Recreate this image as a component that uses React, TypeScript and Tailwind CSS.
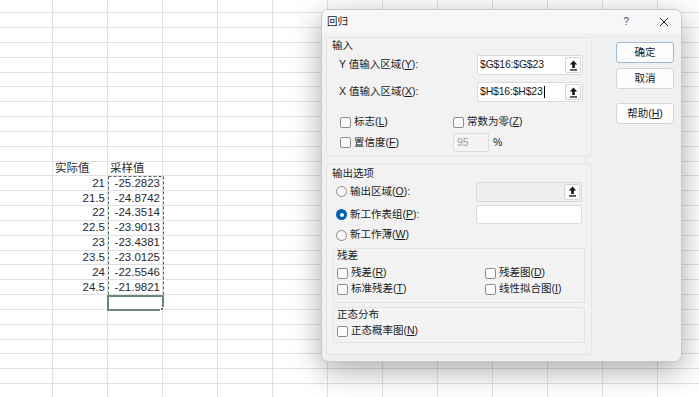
import React from 'react';

const font = "font-['Liberation_Sans','Noto_Sans_CJK_SC',sans-serif]";

const COLS = 13;
const ROWS = 27;

// spreadsheet cell text keyed by "row-col"
const cells: Record<string, { text: string; align: 'left' | 'right' }> = {
    '11-1': { text: '实际值', align: 'left' },
    '11-2': { text: '采样值', align: 'left' },
};
const xs = ['21', '21.5', '22', '22.5', '23', '23.5', '24', '24.5'];
const ys = ['-25.2823', '-24.8742', '-24.3514', '-23.9013', '-23.4381', '-23.0125', '-22.5546', '-21.9821'];
xs.forEach((v, i) => {
    cells[`${12 + i}-1`] = { text: v, align: 'right' };
    cells[`${12 + i}-2`] = { text: ys[i], align: 'right' };
});

function Sheet() {
    const items = [];
    for (let r = 0; r < ROWS; r++) {
        for (let c = 0; c < COLS; c++) {
            const cell = cells[`${r}-${c}`];
            items.push(
                <div
                    key={`${r}-${c}`}
                    className={`border-r border-b border-[#e1e1e1] flex items-center overflow-visible whitespace-nowrap text-[11.5px] text-[#2a2a2a] ${cell?.align === 'right' ? 'justify-end pr-[2px]' : 'pl-[2px]'}`}
                >
                    {cell?.text}
                </div>
            );
        }
    }
    return (
        <div className="grid grid-cols-[53px_repeat(12,55px)] grid-rows-[13.3px_repeat(26,14.83px)]">
            {items}
        </div>
    );
}

function UpArrow() {
    return (
        <svg width="9" height="11" viewBox="0 0 9 11">
            <path d="M4.5 0.6 L8.2 4.6 H5.8 V8 H3.2 V4.6 H0.8 Z" fill="#151515" />
            <rect x="1" y="9.3" width="7" height="1.3" fill="#151515" />
        </svg>
    );
}

function RefInput({ value, disabled, caret }: { value?: string; disabled?: boolean; caret?: boolean }) {
    return (
        <div className={`w-[106px] h-[20px] border border-[#dadada] rounded-[2px] flex items-center justify-between pl-[2px] pr-[1px] ${disabled ? 'bg-[#efefef]' : 'bg-white'}`}>
            <span className="text-[10.5px] text-[#1a1a1a] tracking-[-0.2px]">
                {value}
                {caret && <span className="inline-block w-px h-[12px] bg-black align-middle ml-px" />}
            </span>
            <div className="w-[16px] h-[16px] border border-[#d4d4d4] rounded-[2px] bg-[#fbfbfb] flex items-center justify-center">
                <UpArrow />
            </div>
        </div>
    );
}

function Box() {
    return <span className="w-[11px] h-[11px] rounded-[2px] border border-[#8d8d8d] bg-[#fbfbfb] shrink-0" />;
}

function Check({ children, className = '' }: { children: React.ReactNode; className?: string }) {
    return (
        <div className={`flex items-center h-[14px] gap-[3px] ${className}`}>
            <Box />
            <span className="text-[10.5px] text-[#1a1a1a] whitespace-nowrap">{children}</span>
        </div>
    );
}

function Radio({ children, checked }: { children: React.ReactNode; checked?: boolean }) {
    return (
        <div className="flex items-center gap-[3px]">
            {checked ? (
                <span className="w-[11px] h-[11px] rounded-full bg-[#005fb8] flex items-center justify-center shrink-0">
                    <span className="w-[4px] h-[4px] rounded-full bg-white" />
                </span>
            ) : (
                <span className="w-[11px] h-[11px] rounded-full border border-[#8d8d8d] bg-[#f6f6f6] shrink-0" />
            )}
            <span className="text-[10.5px] text-[#1a1a1a] whitespace-nowrap">{children}</span>
        </div>
    );
}

function Btn({ children, primary }: { children: React.ReactNode; primary?: boolean }) {
    return (
        <div className={`w-[58px] h-[21px] rounded-[3px] border flex items-center justify-center text-[10.5px] text-[#1a1a1a] ${primary ? 'border-[#9fb9d6] bg-[#fcfcfc]' : 'border-[#d6d6d6] bg-[#fdfdfd]'}`}>
            {children}
        </div>
    );
}

function Dialog() {
    return (
        <div className="absolute left-[321px] top-[9px] w-[361px] h-[353px] rounded-[7px] border border-[#c9c9c9] bg-[#f0f0f0] shadow-[0_8px_30px_rgba(0,0,0,0.34)] overflow-hidden flex flex-col">
            {/* title bar */}
            <div className="h-[23px] bg-[#f7f7f7] flex items-center pl-[5px] text-[10.5px] text-[#1a1a1a]">
                <span>回归</span>
                <span className="ml-auto mr-[30px] text-[#555]">?</span>
                <svg width="10" height="10" viewBox="0 0 10 10" className="mr-[12px]">
                    <path d="M1 1 L9 9 M9 1 L1 9" stroke="#222" strokeWidth="1" />
                </svg>
            </div>

            <div className="flex pt-[4px] pl-[4px]">
                <div className="w-[266px] flex flex-col">
                    {/* input group */}
                    <div className="rounded-[3px] border border-[#e4e4e4] bg-[#f2f2f2] pt-[1px] pb-[3px] pl-[5px]">
                        <div className="h-[14px] flex items-center text-[10.5px] text-[#1a1a1a]">输入</div>
                        <div className="mt-[2px] flex items-center pl-[7px]">
                            <span className="w-[138px] text-[10.5px] text-[#1a1a1a]">Y 值输入区域(<u>Y</u>):</span>
                            <RefInput value="$G$16:$G$23" />
                        </div>
                        <div className="mt-[7px] flex items-center pl-[7px]">
                            <span className="w-[138px] text-[10.5px] text-[#1a1a1a]">X 值输入区域(<u>X</u>):</span>
                            <RefInput value="$H$16:$H$23" caret />
                        </div>
                        <div className="mt-[13px] flex items-center pl-[8px]">
                            <Check className="w-[113px]">标志(<u>L</u>)</Check>
                            <Check>常数为零(<u>Z</u>)</Check>
                        </div>
                        <div className="mt-[4px] flex items-center pl-[8px]">
                            <Check className="w-[113px]">置信度(<u>F</u>)</Check>
                            <div className="w-[36px] h-[19px] border border-[#dcdcdc] bg-[#f4f4f4] rounded-[2px] flex items-center pl-[3px] text-[10.5px] text-[#a0a0a0]">95</div>
                            <span className="ml-[4px] text-[10.5px] text-[#1a1a1a]">%</span>
                        </div>
                    </div>

                    {/* output group */}
                    <div className="mt-[8px] rounded-[3px] border border-[#e4e4e4] bg-[#f2f2f2] pt-[2px] pb-[11px] pl-[5px] pr-[6px]">
                        <div className="h-[14px] flex items-center text-[10.5px] text-[#1a1a1a]">输出选项</div>
                        <div className="mt-[1px] flex items-center pl-[4px] h-[19px]">
                            <div className="w-[140px]"><Radio>输出区域(<u>O</u>):</Radio></div>
                            <RefInput disabled />
                        </div>
                        <div className="mt-[4px] flex items-center pl-[4px] h-[19px]">
                            <div className="w-[140px]"><Radio checked>新工作表组(<u>P</u>):</Radio></div>
                            <div className="w-[106px] h-[19px] border border-[#dadada] bg-white rounded-[2px]" />
                        </div>
                        <div className="mt-[4px] flex items-center pl-[4px] h-[14px]">
                            <Radio>新工作薄(<u>W</u>)</Radio>
                        </div>

                        <div className="mt-[6px] ml-[1px] rounded-[3px] border border-[#e4e4e4] bg-[#f3f3f3] pb-[6px] pl-[3px]">
                            <div className="h-[14px] flex items-center text-[10.5px] text-[#1a1a1a]">残差</div>
                            <div className="mt-[3px] flex">
                                <Check className="w-[148px]">残差(<u>R</u>)</Check>
                                <Check>残差图(<u>D</u>)</Check>
                            </div>
                            <div className="mt-[2px] flex">
                                <Check className="w-[148px]">标准残差(<u>T</u>)</Check>
                                <Check>线性拟合图(<u>I</u>)</Check>
                            </div>
                        </div>

                        <div className="mt-[4px] ml-[1px] rounded-[3px] border border-[#e4e4e4] bg-[#f3f3f3] pb-[4px] pl-[3px]">
                            <div className="h-[14px] flex items-center text-[10.5px] text-[#1a1a1a]">正态分布</div>
                            <div className="mt-[2px] flex">
                                <Check>正态概率图(<u>N</u>)</Check>
                            </div>
                        </div>
                    </div>
                </div>

                {/* buttons */}
                <div className="ml-[24px] pt-[5px] flex flex-col">
                    <Btn primary>确定</Btn>
                    <div className="mt-[5px]"><Btn>取消</Btn></div>
                    <div className="mt-[14px]"><Btn>帮助(<u>H</u>)</Btn></div>
                </div>
            </div>
        </div>
    );
}

export default function App() {
    return (
        <div className={`relative w-[699px] h-[397px] overflow-hidden bg-white ${font}`}>
            <Sheet />

            {/* copy marquee around 采样值 data */}
            <svg className="absolute left-[107.5px] top-[176px]" width="57" height="121">
                <rect x="0.5" y="0.5" width="55" height="119" fill="none" stroke="#4f6b5c" strokeWidth="1" strokeDasharray="3 2" />
            </svg>

            {/* active cell */}
            <div className="absolute left-[107px] top-[295px] w-[57px] h-[16px] border-2 border-[#6a8678]">
                <span className="absolute -right-[2px] -bottom-[2px] w-[4px] h-[4px] bg-[#4f6b5c] border border-white" />
            </div>

            <Dialog />
        </div>
    );
}
